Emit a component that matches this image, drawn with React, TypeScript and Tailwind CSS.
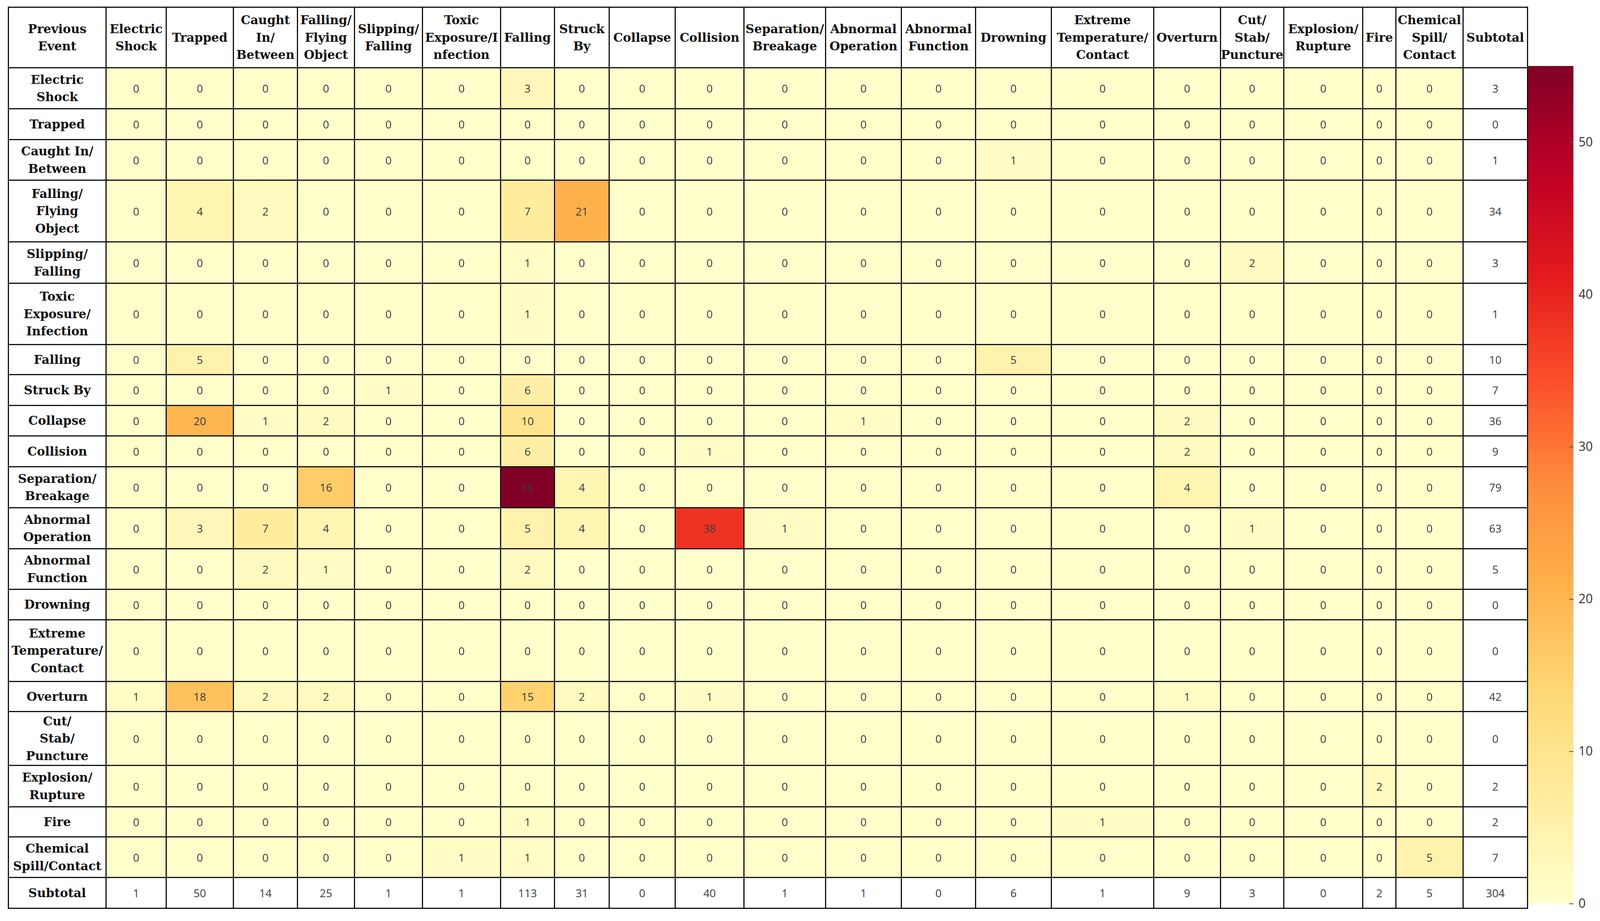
import React from 'react';

// YlOrRd, matplotlib's 9 stops
const STOPS = ['#ffffcc', '#ffeda0', '#fed976', '#feb24c', '#fd8d3c', '#fc4e2a', '#e31a1c', '#bd0026', '#800026'];
const VMAX = 55;

function hexToRgb(h: string) {
  return [parseInt(h.slice(1, 3), 16), parseInt(h.slice(3, 5), 16), parseInt(h.slice(5, 7), 16)];
}

function heat(v: number) {
  const t = Math.min(Math.max(v / VMAX, 0), 1) * (STOPS.length - 1);
  const i = Math.min(Math.floor(t), STOPS.length - 2);
  const f = t - i;
  const a = hexToRgb(STOPS[i]);
  const b = hexToRgb(STOPS[i + 1]);
  const c = a.map((x, k) => Math.round(x + (b[k] - x) * f));
  return `rgb(${c[0]}, ${c[1]}, ${c[2]})`;
}

const headers: string[][] = [
  ['Previous', 'Event'],
  ['Electric', 'Shock'],
  ['Trapped'],
  ['Caught', 'In/', 'Between'],
  ['Falling/', 'Flying', 'Object'],
  ['Slipping/', 'Falling'],
  ['Toxic', 'Exposure/I', 'nfection'],
  ['Falling'],
  ['Struck', 'By'],
  ['Collapse'],
  ['Collision'],
  ['Separation/', 'Breakage'],
  ['Abnormal', 'Operation'],
  ['Abnormal', 'Function'],
  ['Drowning'],
  ['Extreme', 'Temperature/', 'Contact'],
  ['Overturn'],
  ['Cut/', 'Stab/', 'Puncture'],
  ['Explosion/', 'Rupture'],
  ['Fire'],
  ['Chemical', 'Spill/', 'Contact'],
  ['Subtotal'],
];

type Row = { label: string[]; values: number[]; total: number };

const rows: Row[] = [
  { label: ['Electric', 'Shock'], values: [0, 0, 0, 0, 0, 0, 3, 0, 0, 0, 0, 0, 0, 0, 0, 0, 0, 0, 0, 0], total: 3 },
  { label: ['Trapped'], values: [0, 0, 0, 0, 0, 0, 0, 0, 0, 0, 0, 0, 0, 0, 0, 0, 0, 0, 0, 0], total: 0 },
  { label: ['Caught In/', 'Between'], values: [0, 0, 0, 0, 0, 0, 0, 0, 0, 0, 0, 0, 0, 1, 0, 0, 0, 0, 0, 0], total: 1 },
  { label: ['Falling/', 'Flying', 'Object'], values: [0, 4, 2, 0, 0, 0, 7, 21, 0, 0, 0, 0, 0, 0, 0, 0, 0, 0, 0, 0], total: 34 },
  { label: ['Slipping/', 'Falling'], values: [0, 0, 0, 0, 0, 0, 1, 0, 0, 0, 0, 0, 0, 0, 0, 0, 2, 0, 0, 0], total: 3 },
  { label: ['Toxic', 'Exposure/', 'Infection'], values: [0, 0, 0, 0, 0, 0, 1, 0, 0, 0, 0, 0, 0, 0, 0, 0, 0, 0, 0, 0], total: 1 },
  { label: ['Falling'], values: [0, 5, 0, 0, 0, 0, 0, 0, 0, 0, 0, 0, 0, 5, 0, 0, 0, 0, 0, 0], total: 10 },
  { label: ['Struck By'], values: [0, 0, 0, 0, 1, 0, 6, 0, 0, 0, 0, 0, 0, 0, 0, 0, 0, 0, 0, 0], total: 7 },
  { label: ['Collapse'], values: [0, 20, 1, 2, 0, 0, 10, 0, 0, 0, 0, 1, 0, 0, 0, 2, 0, 0, 0, 0], total: 36 },
  { label: ['Collision'], values: [0, 0, 0, 0, 0, 0, 6, 0, 0, 1, 0, 0, 0, 0, 0, 2, 0, 0, 0, 0], total: 9 },
  { label: ['Separation/', 'Breakage'], values: [0, 0, 0, 16, 0, 0, 55, 4, 0, 0, 0, 0, 0, 0, 0, 4, 0, 0, 0, 0], total: 79 },
  { label: ['Abnormal', 'Operation'], values: [0, 3, 7, 4, 0, 0, 5, 4, 0, 38, 1, 0, 0, 0, 0, 0, 1, 0, 0, 0], total: 63 },
  { label: ['Abnormal', 'Function'], values: [0, 0, 2, 1, 0, 0, 2, 0, 0, 0, 0, 0, 0, 0, 0, 0, 0, 0, 0, 0], total: 5 },
  { label: ['Drowning'], values: [0, 0, 0, 0, 0, 0, 0, 0, 0, 0, 0, 0, 0, 0, 0, 0, 0, 0, 0, 0], total: 0 },
  { label: ['Extreme', 'Temperature/', 'Contact'], values: [0, 0, 0, 0, 0, 0, 0, 0, 0, 0, 0, 0, 0, 0, 0, 0, 0, 0, 0, 0], total: 0 },
  { label: ['Overturn'], values: [1, 18, 2, 2, 0, 0, 15, 2, 0, 1, 0, 0, 0, 0, 0, 1, 0, 0, 0, 0], total: 42 },
  { label: ['Cut/', 'Stab/', 'Puncture'], values: [0, 0, 0, 0, 0, 0, 0, 0, 0, 0, 0, 0, 0, 0, 0, 0, 0, 0, 0, 0], total: 0 },
  { label: ['Explosion/', 'Rupture'], values: [0, 0, 0, 0, 0, 0, 0, 0, 0, 0, 0, 0, 0, 0, 0, 0, 0, 0, 2, 0], total: 2 },
  { label: ['Fire'], values: [0, 0, 0, 0, 0, 0, 1, 0, 0, 0, 0, 0, 0, 0, 1, 0, 0, 0, 0, 0], total: 2 },
  { label: ['Chemical', 'Spill/Contact'], values: [0, 0, 0, 0, 0, 1, 1, 0, 0, 0, 0, 0, 0, 0, 0, 0, 0, 0, 0, 5], total: 7 },
];

const subtotals = [1, 50, 14, 25, 1, 1, 113, 31, 0, 40, 1, 1, 0, 6, 1, 9, 3, 0, 2, 5];

const ticks = [0, 10, 20, 30, 40, 50];

const serif = "font-['DejaVu_Serif','Liberation_Serif',serif] font-bold text-[31px] leading-[44.5px] text-[#111]";
const sans = "font-['Open_Sans','Noto_Sans',sans-serif] text-[28px] text-[#3b3b3b]";
const cell = 'border-r-[3px] border-b-[3px] border-[#111] flex items-center justify-center text-center';

function Label({ lines }: { lines: string[] }) {
  return (
    <div className={`${cell} ${serif} flex-col bg-white whitespace-nowrap`}>
      {lines.map((l) => (
        <span key={l} className="block">
          {l}
        </span>
      ))}
    </div>
  );
}

export default function App() {
  return (
    <div className="bg-white pl-[20px] pt-[17px] flex items-start">
      <div className="grid shrink-0 border-l-[3px] border-t-[3px] border-[#111] grid-cols-[250px_154px_172px_164px_146px_174px_200px_138px_140px_169px_176px_209px_194px_190px_194px_262px_171px_162px_202px_85px_172px_165px] grid-rows-[155px_105px_79px_104px_158px_106px_157px_77px_79px_78px_79px_105px_105px_104px_78px_158px_77px_138px_106px_77px_104px_79px]">
        {headers.map((h, i) => (
          <Label key={'h' + i} lines={h} />
        ))}

        {rows.map((r, ri) => (
          <React.Fragment key={'r' + ri}>
            <Label lines={r.label} />
            {r.values.map((v, ci) => (
              <div key={ci} className={`${cell} ${sans}`} style={{ backgroundColor: heat(v) }}>
                {v}
              </div>
            ))}
            <div className={`${cell} ${sans} bg-white`}>{r.total}</div>
          </React.Fragment>
        ))}

        <Label lines={['Subtotal']} />
        {subtotals.map((v, ci) => (
          <div key={'s' + ci} className={`${cell} ${sans} bg-white`}>
            {v}
          </div>
        ))}
        <div className={`${cell} ${sans} bg-white`}>304</div>
      </div>

      {/* colour scale */}
      <div className="relative mt-[152px] h-[2145px] w-[116px] shrink-0 bg-[linear-gradient(to_top,#ffffcc,#ffeda0,#fed976,#feb24c,#fd8d3c,#fc4e2a,#e31a1c,#bd0026,#800026)]">
        {ticks.map((t) => (
          <div
            key={t}
            className="absolute right-0 flex items-center"
            style={{ top: `${((VMAX - t) / VMAX) * 100}%` }}
          >
            <div className="w-[11px] h-[2px] bg-[#555]" />
            <span className="absolute left-[24px] -translate-y-[2px] font-['Open_Sans','Noto_Sans',sans-serif] text-[32px] leading-none text-[#333]">
              {t}
            </span>
          </div>
        ))}
      </div>
    </div>
  );
}
